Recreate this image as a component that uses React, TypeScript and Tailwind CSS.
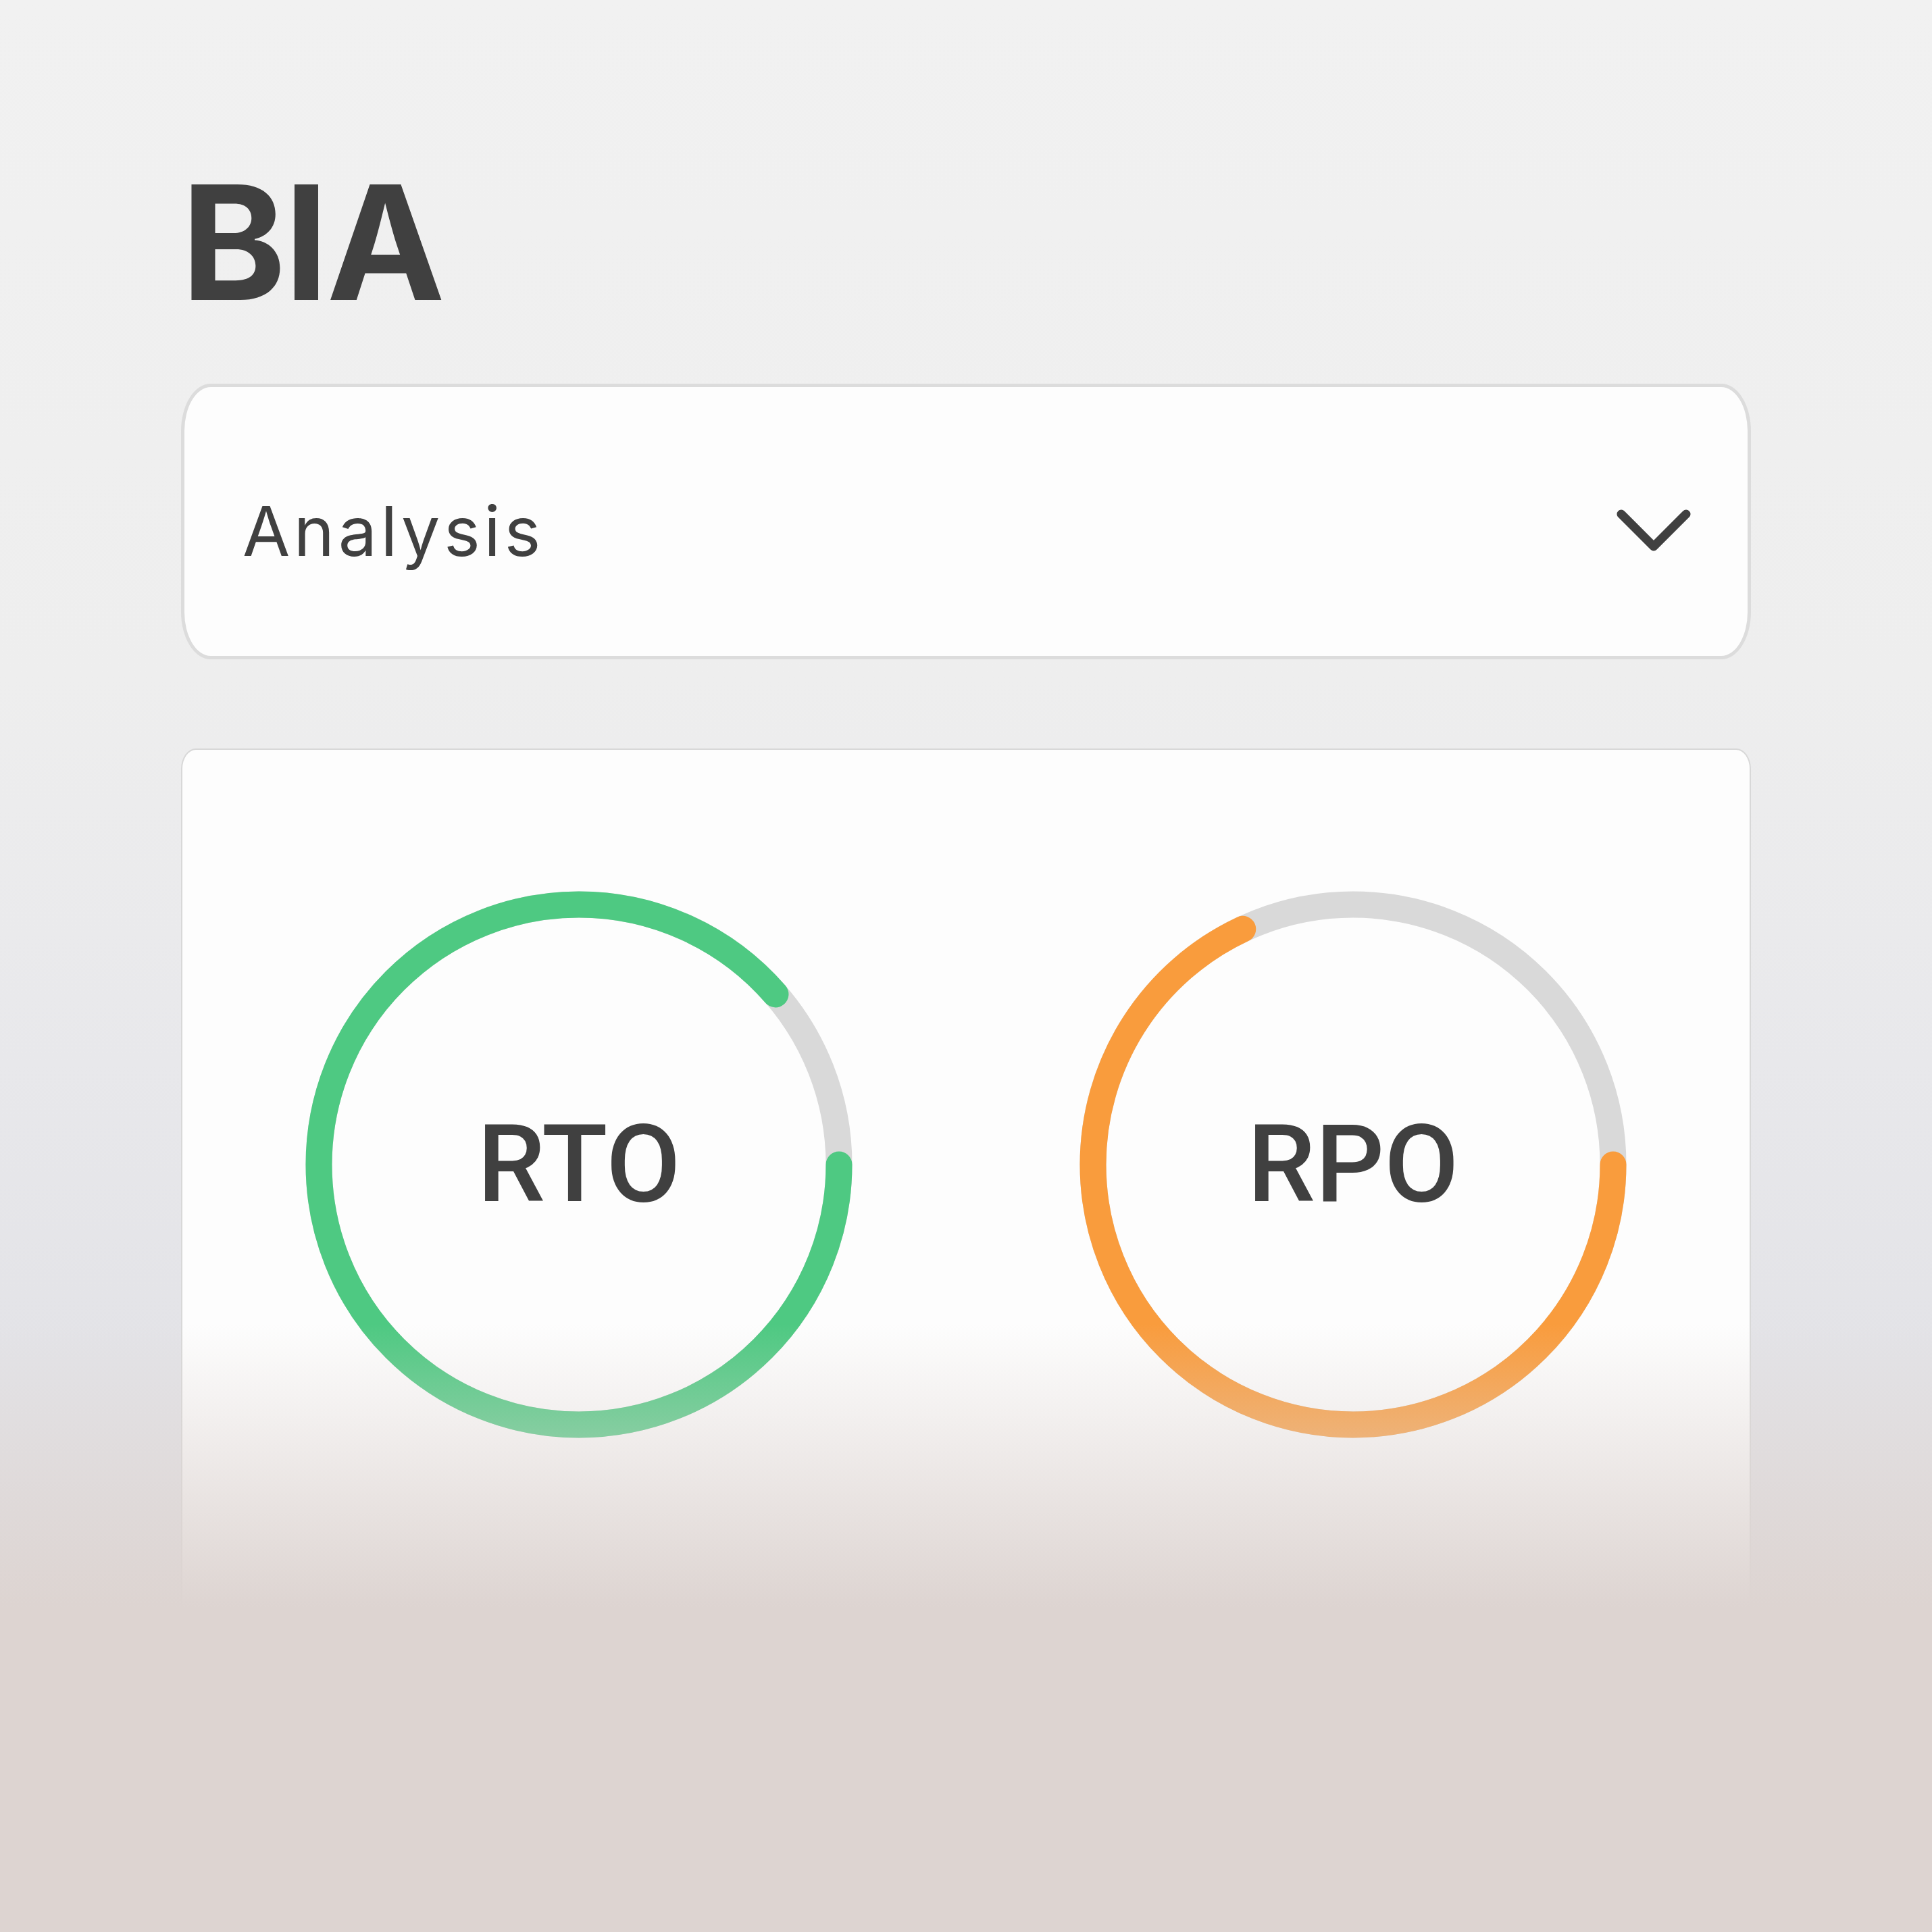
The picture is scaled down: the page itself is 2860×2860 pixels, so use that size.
function Ring({ label, value, color }: { label: string; value: number; color: string }) {
	const r = 385
	const c = 2 * Math.PI * r
	return (
		<div className="relative size-[810px] flex items-center justify-center">
			<svg className="absolute inset-0" width="810" height="810" viewBox="0 0 810 810">
				<circle cx="405" cy="405" r={r} fill="none" stroke="#d9d9d9" strokeWidth="39" />
				<circle
					cx="405"
					cy="405"
					r={r}
					fill="none"
					stroke={color}
					strokeWidth="39"
					strokeLinecap="round"
					strokeDasharray={`${c * value} ${c}`}
				/>
			</svg>
			<span className="relative font-['Roboto',sans-serif] font-medium text-[160px] leading-none text-[#404040]">{label}</span>
		</div>
	)
}

export default function App() {
	return (
		<div className="relative h-[2860px] overflow-hidden bg-[linear-gradient(180deg,#f1f1f1_0%,#eeeeee_35%,#e8e8eb_55%,#e3e3e7_70%)] font-['Inter',sans-serif]">
			<div className="px-[268px] pt-[241px]">
				<h1 className="text-[235px] font-bold leading-none text-[#404040] tracking-[-3px]">BIA</h1>

				<button className="mt-[92px] w-full h-[408px] flex items-center justify-between pl-[86px] pr-[83px] pt-[28px] bg-[#fdfdfd] border-[5px] border-[#dcdcdc] rounded-[44px/70px]">
					<span className="font-normal text-[102px] leading-none text-[#404040] tracking-[5.5px]">Analysis</span>
					<svg width="112" height="66" viewBox="0 0 112 66" fill="none">
						<path d="M8 8 L56 56 L104 8" stroke="#404040" strokeWidth="13" strokeLinecap="round" strokeLinejoin="round" />
					</svg>
				</button>

				<div className="mt-[132px] h-[1400px] bg-[#fdfdfd] border-2 border-[#d8d8d8] rounded-[22px/30px] px-[182px] pt-[209px]">
					<div className="flex justify-between">
						<Ring label="RTO" value={0.886} color="#4ec982" />
						<Ring label="RPO" value={0.68} color="#f99c3d" />
					</div>
				</div>
			</div>

			{/* fade over the lower part of the page */}
			<div className="absolute inset-x-0 top-[1960px] bottom-0 bg-[linear-gradient(180deg,rgba(221,212,209,0)_0px,rgba(221,212,209,1)_420px)]" />
		</div>
	)
}
